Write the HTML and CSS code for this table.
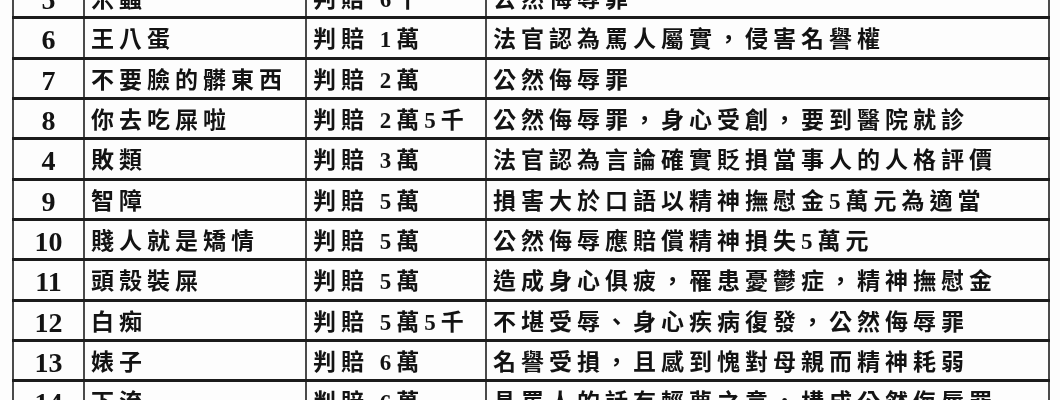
FILE: index.html
```html
<!DOCTYPE html>
<html lang="zh-Hant-TW">
<head>
<meta charset="utf-8">
<title>罵人判賠表</title>
<link rel="stylesheet" href="styles.css">
</head>
<body>
<div class="sheet">
<table class="verdicts">
<colgroup>
<col class="c-no"><col class="c-word"><col class="c-amt"><col class="c-why">
</colgroup>
<tbody>
<tr><td class="no">5</td><td>米蟲</td><td>判賠 6千</td><td>公然侮辱罪</td></tr>
<tr><td class="no">6</td><td>王八蛋</td><td>判賠 1萬</td><td>法官認為罵人屬實，侵害名譽權</td></tr>
<tr><td class="no">7</td><td>不要臉的髒東西</td><td>判賠 2萬</td><td>公然侮辱罪</td></tr>
<tr><td class="no">8</td><td>你去吃屎啦</td><td>判賠 2萬5千</td><td>公然侮辱罪，身心受創，要到醫院就診</td></tr>
<tr><td class="no">4</td><td>敗類</td><td>判賠 3萬</td><td>法官認為言論確實貶損當事人的人格評價</td></tr>
<tr><td class="no">9</td><td>智障</td><td>判賠 5萬</td><td>損害大於口語以精神撫慰金5萬元為適當</td></tr>
<tr><td class="no">10</td><td>賤人就是矯情</td><td>判賠 5萬</td><td>公然侮辱應賠償精神損失5萬元</td></tr>
<tr><td class="no">11</td><td>頭殼裝屎</td><td>判賠 5萬</td><td>造成身心俱疲，罹患憂鬱症，精神撫慰金</td></tr>
<tr><td class="no">12</td><td>白痴</td><td>判賠 5萬5千</td><td>不堪受辱、身心疾病復發，公然侮辱罪</td></tr>
<tr><td class="no">13</td><td>婊子</td><td>判賠 6萬</td><td>名譽受損，且感到愧對母親而精神耗弱</td></tr>
<tr><td class="no">14</td><td>下流</td><td>判賠 6萬</td><td>具罵人的話有輕蔑之意，構成公然侮辱罪</td></tr>
</tbody>
</table>
</div>
</body>
</html>
```
FILE: styles.css
```css
html, body {
  margin: 0;
  padding: 0;
  background: #fdfdfd;
}
.sheet {
  width: 1060px;
  height: 400px;
  overflow: hidden;
  padding-left: 12px;
  box-sizing: border-box;
}
.verdicts {
  margin-top: -24px;
  width: 1036px;
  table-layout: fixed;
  border-collapse: collapse;
  font-family: "Liberation Serif", "Noto Sans CJK TC", serif;
  font-weight: 700;
  color: #131313;
  filter: blur(0.45px);
}
.c-no { width: 71px; }
.c-word { width: 222px; }
.c-amt { width: 180px; }
.c-why { width: 563px; }
.verdicts tr {
  height: 40.33px;
}
.verdicts td {
  padding: 5px 0 0 6px;
  border-top: 3px solid #1c1c1c;
  border-bottom: 3px solid #1c1c1c;
  border-left: 2px solid #4a4a4a;
  border-right: 2px solid #4a4a4a;
  font-size: 23px;
  letter-spacing: 5px;
  line-height: 28px;
  white-space: nowrap;
  vertical-align: middle;
}
.verdicts td.no {
  padding-left: 0;
  text-align: center;
  font-size: 28px;
  letter-spacing: 0;
}
```
